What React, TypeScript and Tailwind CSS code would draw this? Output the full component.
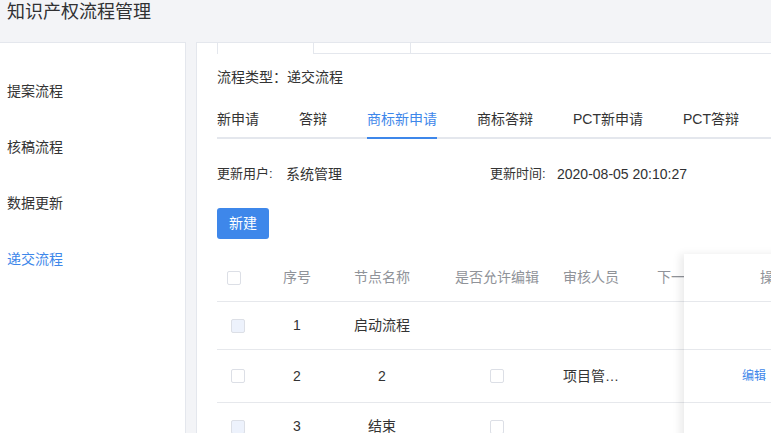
import React from "react";

const menu = ["提案流程", "核稿流程", "数据更新", "递交流程"];
const tabs = ["新申请", "答辩", "商标新申请", "商标答辩", "PCT新申请", "PCT答辩"];

function Checkbox({ disabled }: { disabled?: boolean }) {
  return (
    <span
      className={
        "block w-[14px] h-[14px] rounded-[2px] border border-[#dcdfe6] " +
        (disabled ? "bg-[#edf2fc]" : "bg-white")
      }
    />
  );
}

const rows = [
  { no: "1", name: "启动流程", disabled: true, edit: false, auditor: "", h: "h-[48px]", op: "" },
  { no: "2", name: "2", disabled: false, edit: true, auditor: "项目管理员", h: "h-[53px]", op: "编辑" },
  { no: "3", name: "结束", disabled: true, edit: true, auditor: "", h: "h-[48px]", op: "" },
];

export default function App() {
  return (
    <div className="w-full h-[433px] overflow-hidden bg-[#f3f4f7] text-[#333] font-['Liberation_Sans','Noto_Sans_CJK_SC',sans-serif]">
      {/* Header */}
      <div className="h-[42px] pl-[7px] text-[18px] leading-[25px] text-[#303133]">知识产权流程管理</div>

      <div className="flex h-[391px]">
        {/* Sidebar */}
        <div className="w-[186px] shrink-0 bg-white border-t border-r border-[#e4e7ed] pt-[20px]">
          {menu.map((m, i) => (
            <div
              key={m}
              className={
                "h-[56px] leading-[56px] pl-[7px] text-[14px] " +
                (i === 3 ? "text-[#3e87ea]" : "text-[#333]")
              }
            >
              {m}
            </div>
          ))}
        </div>

        {/* Main panel */}
        <div className="ml-[10px] flex-1 min-w-0 bg-white border-t border-l border-[#e4e7ed]">
          {/* card tab strip (scrolled) */}
          <div className="flex h-[11px]">
            <div className="w-[20px] shrink-0" />
            <div className="w-[97px] shrink-0 border-l border-r border-[#e4e7ed]" />
            <div className="w-[97px] shrink-0 border-r border-b border-[#e4e7ed]" />
            <div className="flex-1 border-b border-[#e4e7ed]" />
          </div>

          <div className="pl-[20px]">
            <div className="mt-[13px] h-[20px] leading-[20px] text-[14px]">流程类型：递交流程</div>

            {/* tabs */}
            <div className="mt-[15px] flex gap-10 border-b-2 border-[#e4e7ed] text-[14px] whitespace-nowrap">
              {tabs.map((t, i) => (
                <div
                  key={t}
                  className={
                    "h-[35px] leading-[35px] -mb-[2px] border-b-2 box-content " +
                    (i === 2 ? "border-[#3e87ea] text-[#3e87ea]" : "border-transparent text-[#333]")
                  }
                >
                  {t}
                </div>
              ))}
            </div>

            {/* info */}
            <div className="mt-[25px] flex h-[20px] items-center text-[14px] whitespace-nowrap">
              <div className="w-[273px] flex">
                <span className="w-[69px] text-[13px] text-[#333]">更新用户:</span>
                <span>系统管理</span>
              </div>
              <span className="w-[67px] text-[13px]">更新时间:</span>
              <span className="text-[14px] text-[#303133]">2020-08-05 20:10:27</span>
            </div>

            <button className="mt-[24px] w-[52px] h-[31px] rounded-[3px] bg-[#3e87ea] text-white text-[14px]">
              新建
            </button>

            {/* table */}
            <div className="relative mt-[15px] text-[14px] whitespace-nowrap">
              <div className="flex h-[48px] items-center border-b border-[#e6e8ec] text-[#909399]">
                <div className="w-[45px] shrink-0 pl-[10px]">
                  <Checkbox />
                </div>
                <div className="w-[70px] shrink-0 text-center">序号</div>
                <div className="w-[100px] shrink-0 text-center">节点名称</div>
                <div className="w-[130px] shrink-0 text-center">是否允许编辑</div>
                <div className="w-[58px] shrink-0 text-center">审核人员</div>
                <div className="w-[130px] shrink-0 text-center">下一节点</div>
              </div>
              {rows.map((r) => (
                <div key={r.no} className={"flex items-center border-b border-[#e6e8ec] text-[#333] " + r.h}>
                  <div className="w-[45px] shrink-0 pl-[14px]">
                    <Checkbox disabled={r.disabled} />
                  </div>
                  <div className="w-[70px] shrink-0 text-center">{r.no}</div>
                  <div className="w-[100px] shrink-0 text-center">{r.name}</div>
                  <div className="w-[130px] shrink-0 flex justify-center">
                    {r.edit && <Checkbox />}
                  </div>
                  <div className="w-[58px] shrink-0 pl-px">
                    {r.auditor && <div className="w-[57px] truncate">{r.auditor}</div>}
                  </div>
                  <div className="w-[130px] shrink-0" />
                </div>
              ))}

              {/* fixed right column */}
              <div className="absolute left-[467px] top-0 bottom-0 w-[220px] bg-white shadow-[-4px_0_8px_rgba(0,0,0,0.08)]">
                <div className="h-[48px] flex items-center border-b border-[#e6e8ec] pl-[76px] text-[#909399]">操作</div>
                {rows.map((r) => (
                  <div key={r.no} className={"flex items-center border-b border-[#e6e8ec] pl-[58px] text-[12px] text-[#3e87ea] " + r.h}>
                    {r.op}
                  </div>
                ))}
              </div>
            </div>
          </div>
        </div>
      </div>
    </div>
  );
}
